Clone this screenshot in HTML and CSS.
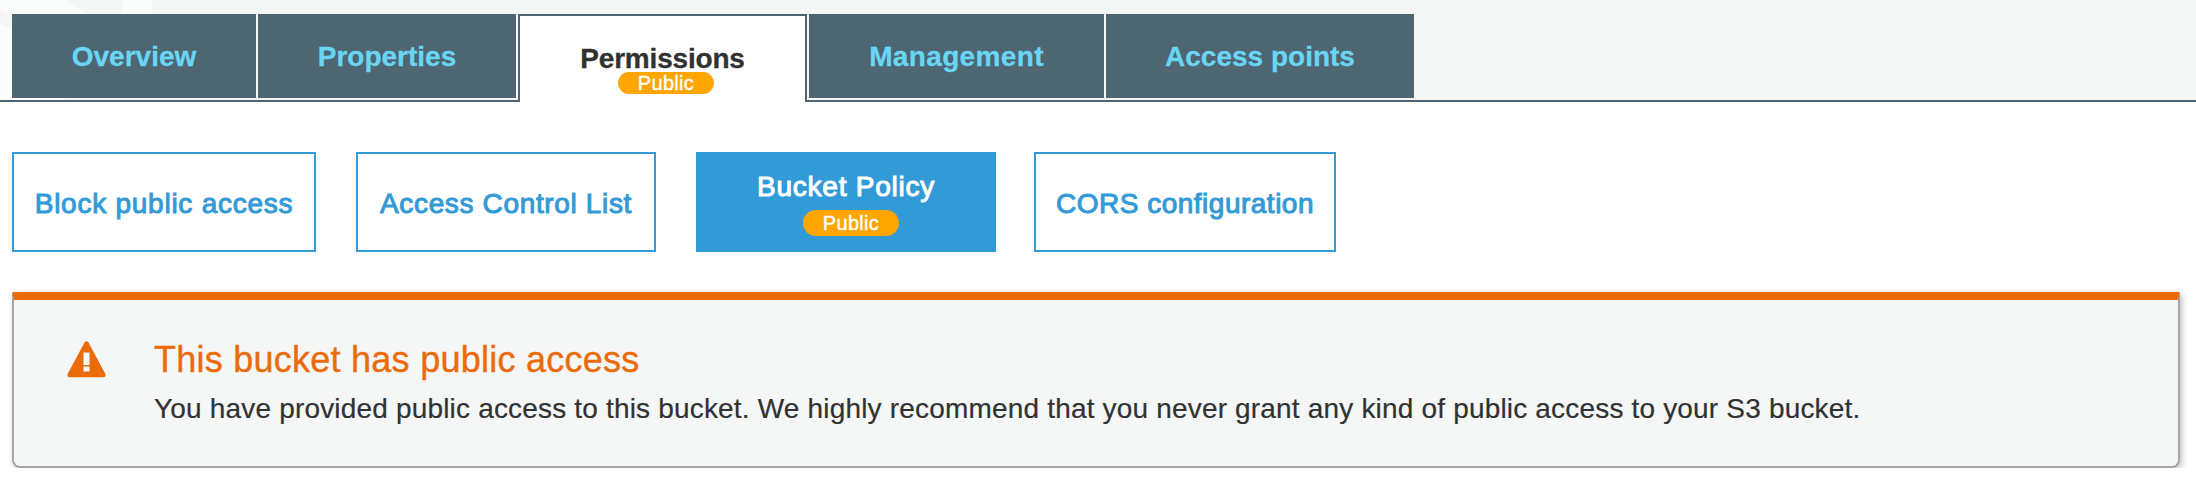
FILE: index.html
```
<!DOCTYPE html>
<html lang="en">
<head>
<meta charset="utf-8">
<title>Bucket permissions</title>
<link rel="stylesheet" href="styles.css">
</head>
<body>
<header class="header">
  <svg class="header-art" width="160" height="100" viewBox="0 0 160 100" aria-hidden="true">
    <path d="M0 0H151Q153 8 151 14V50L63 100H0Z" fill="#fbfdfc"/>
    <path d="M65 0H123Q125 8 119 14H88ZM0 9L12 15V29L0 24Z" fill="#f4f7f6"/>
  </svg>
  <nav class="tabs">
    <a class="tab overview">Overview</a>
    <a class="tab properties">Properties</a>
    <a class="tab active"><span class="tab-label">Permissions</span><span class="badge">Public</span></a>
    <a class="tab management">Management</a>
    <a class="tab access">Access points</a>
  </nav>
</header>
<main>
  <nav class="sections">
    <a class="section block"><span class="section-label">Block public access</span></a>
    <a class="section acl"><span class="section-label">Access Control List</span></a>
    <a class="section policy"><span class="section-label">Bucket Policy</span><span class="badge tall">Public</span></a>
    <a class="section cors"><span class="section-label">CORS configuration</span></a>
  </nav>
  <section class="alert">
    <svg class="alert-icon" width="39" height="37" viewBox="0 0 39 37" aria-hidden="true">
      <path d="M17.500 1.500Q19.500-1.200 21.500 1.500L38.400 33Q39.200 36 36.500 36.300H2.500Q-.2 36 .6 33Z" fill="#eb6b0a"/>
      <path d="M16.500 11.500h6v12.500h-6zM16.500 25.500h6v5h-6z" fill="#f4f7f6"/>
    </svg>
    <div class="alert-copy">
      <h2 class="alert-title">This bucket has public access</h2>
      <p class="alert-text">You have provided public access to this bucket. We highly recommend that you never grant any kind of public access to your S3 bucket.</p>
    </div>
  </section>
</main>
</body>
</html>
```
FILE: styles.css
```
* { box-sizing: border-box; }
body {
  margin: 0;
  background: #fff;
  color: #303232;
  font: 28px/32px "Liberation Sans", Arial, sans-serif;
}
.header {
  position: relative;
  height: 102px;
  padding: 14px 12px 0;
  background: #f4f7f6;
  border-bottom: 2px solid #4e6572;
}
.header-art { position: absolute; left: 0; top: 0; }
.tabs { position: relative; display: flex; gap: 2px; }
.tab {
  height: 84px;
  padding-top: 27px;
  background: #4e6572;
  color: #69d6f3;
  font-weight: bold;
  text-align: center;
  white-space: nowrap;
  -webkit-text-stroke: .3px currentColor;
}
.overview { width: 244px; }
.properties { width: 258px; }
.management { width: 295px; letter-spacing: .35px; }
.access { width: 308px; }
.tab.active {
  display: flex;
  flex-direction: column;
  align-items: center;
  width: 289px;
  height: 88px;
  padding-top: 27px;
  background: #fff;
  border: 2px solid #4e6572;
  border-bottom: 0;
  color: #303232;
}
.badge {
  width: 96px;
  height: 22px;
  border-radius: 11px;
  background: #ffa500;
  color: #fff;
  font-size: 20px;
  font-weight: normal;
  line-height: 22px;
  letter-spacing: .3px;
  text-align: center;
  -webkit-text-stroke: .4px #fff;
}
.tab .tab-label { height: 29px; letter-spacing: -.2px; }
.tab .badge { margin-left: 7px; }
.badge.tall { height: 26px; border-radius: 13px; line-height: 26px; margin: 7px 0 0 10px; }
.sections { display: flex; padding: 50px 12px 0; }
.section {
  display: flex;
  flex-direction: column;
  align-items: center;
  justify-content: center;
  height: 100px;
  padding-top: 4px;
  border: 2px solid #329ad7;
  color: #329ad7;
  white-space: nowrap;
  -webkit-text-stroke: 1px currentColor;
}
.block { width: 304px; letter-spacing: .75px; }
.acl { width: 300px; margin-left: 40px; letter-spacing: .65px; }
.policy { width: 300px; margin-left: 40px; padding-top: 2px; background: #329ad7; color: #fff; letter-spacing: .75px; }
.cors { width: 302px; margin-left: 38px; letter-spacing: .5px; }
.alert {
  display: flex;
  gap: 48px;
  width: 2168px;
  height: 176px;
  margin: 40px 0 0 12px;
  padding: 40px 53px 0;
  background: #f4f7f6;
  border: 2px solid #a2a7a6;
  border-top: 8px solid #eb6b0a;
  border-radius: 2px 2px 8px 8px;
  box-shadow: 2px 2px 6px rgba(0, 0, 0, .25);
}
.alert-icon { flex: none; margin-top: 1px; }
.alert-title {
  margin: 0;
  color: #eb6b0a;
  font-size: 36px;
  font-weight: normal;
  line-height: 40px;
  letter-spacing: .25px;
  -webkit-text-stroke: .4px currentColor;
}
.alert-text {
  margin: 13px 0 0;
  letter-spacing: .18px;
  white-space: nowrap;
  -webkit-text-stroke: .2px currentColor;
}
```
